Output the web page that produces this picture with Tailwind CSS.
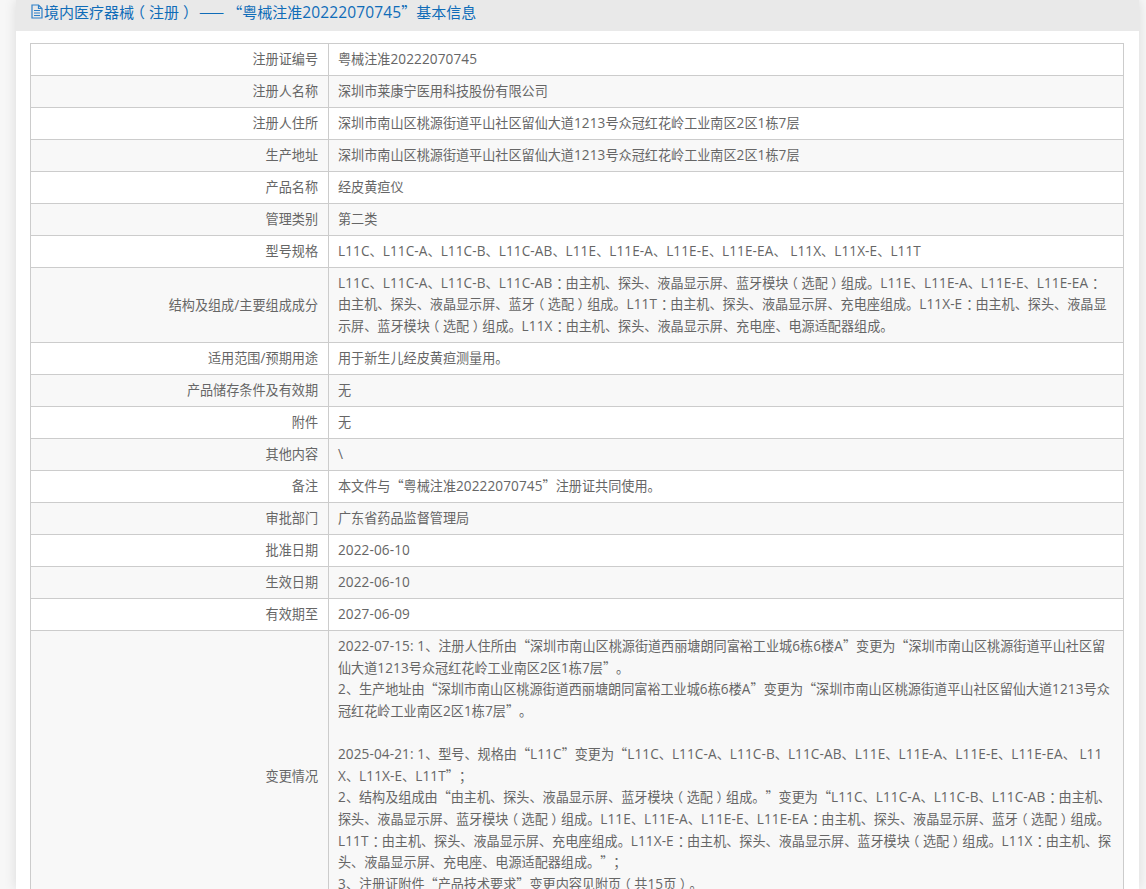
<!DOCTYPE html>
<html lang="zh-CN">
  <head>
    <meta charset="UTF-8" />
    <meta name="viewport" content="width=device-width, initial-scale=1.0" />
    <title>基本信息</title>
    <script src="https://cdn.jsdelivr.net/npm/@tailwindcss/browser@4"></script>
  </head>
  <body class="bg-[#f7f7f7] h-[889px] overflow-hidden font-['Noto_Sans_CJK_SC',sans-serif] text-[13.125px] leading-[21px] text-[#666] [text-spacing-trim:space-all]">
    <div class="ml-4 w-[1123px] bg-white h-[889px] shadow-[0_0_12px_rgba(0,0,0,0.12)] overflow-hidden">
      <div class="h-[31px] bg-[#e9e9e9] pl-[14px] pb-[8px] flex items-center whitespace-nowrap text-[15px] text-[#0f6cb8]">
        <svg class="w-[14px] h-[15px] shrink-0" viewBox="0 0 14 15" fill="none" stroke="#2f80c8" stroke-width="1.2">
          <path d="M2 1h6.5l3.5 3.5V14H2z" />
          <path d="M8.5 1v3.5H12M4 6.5h6M4 9h6M4 11.5h6" />
        </svg>
        <span class="fix">境内医疗器械（注册）</span>
        <span class="ml-[5px] tracking-[3px]">——</span>
        <span class="fix">“粤械注准20222070745”基本信息</span>
      </div>
      <div class="pt-3 px-[14px]">
        <table class="w-[1094px] table-fixed border-collapse">
          <colgroup>
            <col class="w-[298px]" />
            <col />
          </colgroup>
          <tbody class="[&_td]:border [&_td]:border-[#ccc] [&_td]:pt-[4px] [&_td]:pb-[6px] [&_td]:pl-[9px] [&_td]:pr-[11px] [&_td]:break-all [&_tr:nth-child(even)]:bg-[#f8f8f8] [&_td:first-child]:text-right [&_td:first-child]:pr-[10px]">
            <tr><td>注册证编号</td><td class="fix">粤械注准20222070745</td></tr>
            <tr><td>注册人名称</td><td>深圳市莱康宁医用科技股份有限公司</td></tr>
            <tr><td>注册人住所</td><td class="fix">深圳市南山区桃源街道平山社区留仙大道1213号众冠红花岭工业南区2区1栋7层</td></tr>
            <tr><td>生产地址</td><td class="fix">深圳市南山区桃源街道平山社区留仙大道1213号众冠红花岭工业南区2区1栋7层</td></tr>
            <tr><td>产品名称</td><td>经皮黄疸仪</td></tr>
            <tr><td>管理类别</td><td>第二类</td></tr>
            <tr><td>型号规格</td><td class="fix">L11C、L11C-A、L11C-B、L11C-AB、L11E、L11E-A、L11E-E、L11E-EA、 L11X、L11X-E、L11T</td></tr>
            <tr><td class="fix">结构及组成/主要组成成分</td><td class="fix leading-[21.4px]">L11C、L11C-A、L11C-B、L11C-AB：由主机、探头、液晶显示屏、蓝牙模块（选配）组成。L11E、L11E-A、L11E-E、L11E-EA：由主机、探头、液晶显示屏、蓝牙（选配）组成。L11T：由主机、探头、液晶显示屏、充电座组成。L11X-E：由主机、探头、液晶显示屏、蓝牙模块（选配）组成。L11X：由主机、探头、液晶显示屏、充电座、电源适配器组成。</td></tr>
            <tr><td class="fix">适用范围/预期用途</td><td>用于新生儿经皮黄疸测量用。</td></tr>
            <tr><td>产品储存条件及有效期</td><td>无</td></tr>
            <tr><td>附件</td><td>无</td></tr>
            <tr><td>其他内容</td><td class="fix">\</td></tr>
            <tr><td>备注</td><td class="fix">本文件与“粤械注准20222070745”注册证共同使用。</td></tr>
            <tr><td>审批部门</td><td>广东省药品监督管理局</td></tr>
            <tr><td>批准日期</td><td class="fix">2022-06-10</td></tr>
            <tr><td>生效日期</td><td class="fix">2022-06-10</td></tr>
            <tr><td>有效期至</td><td class="fix">2027-06-09</td></tr>
            <tr>
              <td>变更情况</td>
              <td class="fix leading-[21.6px]">2022-07-15: 1、注册人住所由“深圳市南山区桃源街道西丽塘朗同富裕工业城6栋6楼A”变更为“深圳市南山区桃源街道平山社区留仙大道1213号众冠红花岭工业南区2区1栋7层”。<br />2、生产地址由“深圳市南山区桃源街道西丽塘朗同富裕工业城6栋6楼A”变更为“深圳市南山区桃源街道平山社区留仙大道1213号众冠红花岭工业南区2区1栋7层”。<br /><br />2025-04-21: 1、型号、规格由“L11C”变更为“L11C、L11C-A、L11C-B、L11C-AB、L11E、L11E-A、L11E-E、L11E-EA、 L11X、L11X-E、L11T”；<br />2、结构及组成由“由主机、探头、液晶显示屏、蓝牙模块（选配）组成。”变更为“L11C、L11C-A、L11C-B、L11C-AB：由主机、探头、液晶显示屏、蓝牙模块（选配）组成。L11E、L11E-A、L11E-E、L11E-EA：由主机、探头、液晶显示屏、蓝牙（选配）组成。L11T：由主机、探头、液晶显示屏、充电座组成。L11X-E：由主机、探头、液晶显示屏、蓝牙模块（选配）组成。L11X：由主机、探头、液晶显示屏、充电座、电源适配器组成。”；<br />3、注册证附件“产品技术要求”变更内容见附页（共15页）。<br /><br /></td>
            </tr>
          </tbody>
        </table>
      </div>
    </div>
  </body>
  <script>
    // latin runs use Open Sans, fullwidth brackets and colons sit centred in their box
    const wrap = (m) => {
      if (m === "<br>") return m;
      if (m === "（") return '<span class="-ml-[0.27em] mr-[0.27em]">（</span>';
      if (m === "）") return '<span class="ml-[0.27em] -mr-[0.27em]">）</span>';
      if (m === "：") return '<span class="ml-[0.3em] -mr-[0.3em]">：</span>';
      return `<span class="font-['Open_Sans'] text-[1.035em] leading-none tracking-[0.008em]">${m}</span>`;
    };
    document.querySelectorAll(".fix").forEach((el) => {
      el.innerHTML = el.innerHTML.replace(/<br>|[（）：]|[A-Za-z0-9:\-\\\/ ]+/g, wrap);
    });
  </script>
</html>
